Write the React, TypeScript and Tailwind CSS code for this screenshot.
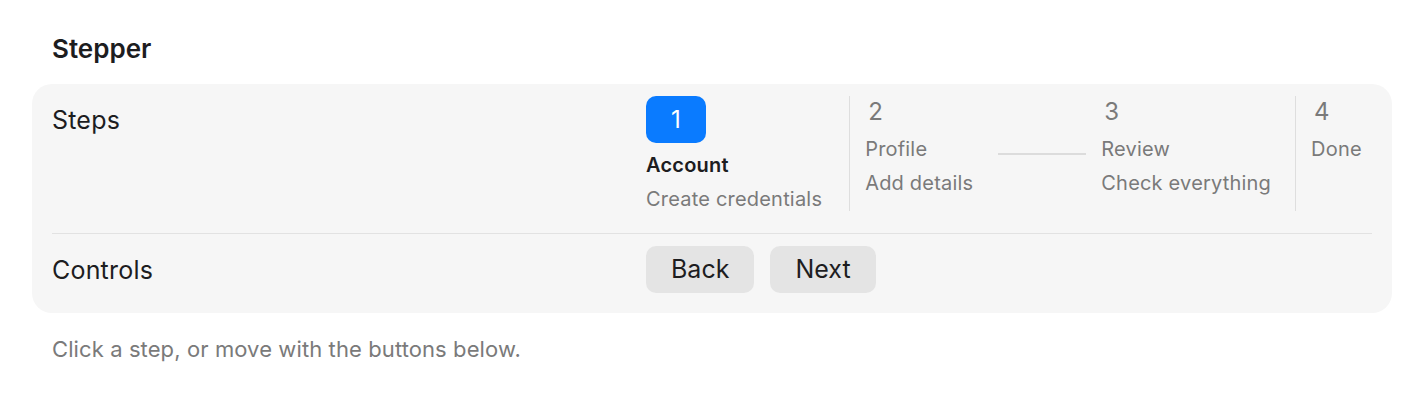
import React from "react";

const steps = [
  { n: "1", title: "Account", sub: "Create credentials" },
  { n: "2", title: "Profile", sub: "Add details" },
  { n: "3", title: "Review", sub: "Check everything" },
  { n: "4", title: "Done", sub: "" },
];

function Step({ s, active }: { s: (typeof steps)[number]; active: boolean }) {
  return (
    <div className="flex flex-col items-start tracking-[0.2px]">
      {active ? (
        <div className="flex h-[47px] w-[60px] items-center justify-center rounded-[10px] bg-[#0a7bff] text-[24px] leading-none text-white">
          {s.n}
        </div>
      ) : (
        <div className="flex h-[31px] items-center pl-[3px] text-[24px] leading-none text-[#7a7a7a]">{s.n}</div>
      )}
      <div
        className={
          "mt-[10px] h-[24px] text-[20px] leading-[24px] " +
          (active ? "font-semibold text-[#1d1d1f]" : "text-[#7a7a7a]")
        }
      >
        {s.title}
      </div>
      {s.sub && (
        <div className="mt-[10px] h-[24px] text-[20px] leading-[24px] text-[#7a7a7a]">{s.sub}</div>
      )}
    </div>
  );
}

export default function App() {
  return (
    <div
      className="min-h-[394px] w-[1424px] bg-white px-[32px] pt-[33px] text-[#1d1d1f]"
      style={{ fontFamily: "Inter, 'Noto Sans', sans-serif" }}
    >
      <h1 className="px-[20px] text-[26px] font-semibold leading-[32px]">Stepper</h1>
      <div className="mt-[19px] rounded-[20px] bg-[#f6f6f6] px-[20px]">
        <div className="flex border-b border-[#e2e2e2] pb-[22px] pt-[12px]">
          <div className="flex h-[47px] w-[594px] shrink-0 items-center pt-[3px] text-[25px] tracking-[0.2px]">Steps</div>
          <div className="flex items-stretch">
            <div className="pr-[27px]">
              <Step s={steps[0]} active />
            </div>
            <div className="w-px bg-[#dedede]" />
            <div className="pl-[15px] pr-[25px]">
              <Step s={steps[1]} active={false} />
            </div>
            <div className="flex items-center">
              <div className="h-[2px] w-[88px] bg-[#dcdcdc]" />
            </div>
            <div className="pl-[15px] pr-[24px]">
              <Step s={steps[2]} active={false} />
            </div>
            <div className="w-px bg-[#dedede]" />
            <div className="pl-[15px]">
              <Step s={steps[3]} active={false} />
            </div>
          </div>
        </div>
        <div className="flex pb-[20px] pt-[12px]">
          <div className="flex h-[47px] w-[594px] shrink-0 items-center pt-[3px] text-[25px] tracking-[0.2px]">Controls</div>
          <div className="flex gap-[16px]">
            <button className="h-[47px] rounded-[10px] bg-[#e4e4e4] px-[25px] text-[25px] text-[#1d1d1f]">Back</button>
            <button className="h-[47px] rounded-[10px] bg-[#e4e4e4] px-[25px] text-[25px] text-[#1d1d1f]">Next</button>
          </div>
        </div>
      </div>
      <p className="mt-[21px] px-[20px] text-[22px] leading-[30px] tracking-[0.1px] text-[#7a7a7a]">
        Click a step, or move with the buttons below.
      </p>
    </div>
  );
}
